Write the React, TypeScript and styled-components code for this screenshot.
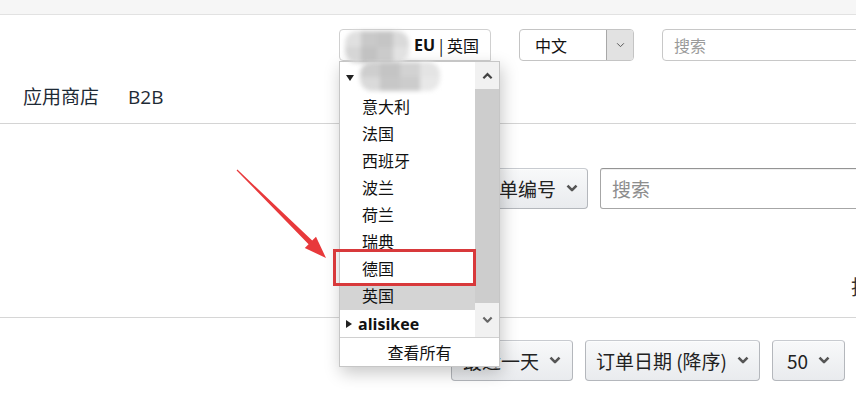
import React from 'react';
import styled, { createGlobalStyle } from 'styled-components';

const GlobalStyle = createGlobalStyle`
    body {
        margin: 0;
        overflow: hidden;
        background: #fff;
        font-family: "Noto Sans CJK SC", "Noto Sans", sans-serif;
        color: #111;
    }
`;

const Page = styled.div`
    position: relative;
    width: 880px;
    height: 399px;
`;

const TopStrip = styled.div`
    height: 14px;
    background: #f6f6f6;
    border-bottom: 1px solid #e2e2e2;
`;

const HeaderRow = styled.div`
    display: flex;
    align-items: center;
    padding: 14px 0 0 339px;
    height: 32px;
    gap: 28px;
`;

const AccountSwitcher = styled.div`
    position: relative;
    width: 152px;
    height: 32px;
    box-sizing: border-box;
    border: 1px solid #d0d0d0;
    border-radius: 4px 4px 0 4px;
    display: flex;
    align-items: center;
    justify-content: flex-end;
    padding-right: 11px;
    font-size: 16px;
    z-index: 2;
`;

const Bold = styled.b`
    font-family: "Open Sans", "Noto Sans CJK SC", sans-serif;
    font-weight: 700;
    margin-right: 4px;
`;

// mosaic blur that hides the account name; it straddles the button and the first list row
const Redaction = styled.div<{ $left: number; $top: number; $w: number; $h: number }>`
    position: absolute;
    left: ${p => p.$left}px;
    top: ${p => p.$top}px;
    width: ${p => p.$w}px;
    height: ${p => p.$h}px;
    display: grid;
    grid-template-columns: repeat(4, 1fr);
    grid-template-rows: repeat(2, 1fr);
    filter: blur(2px);
    border-radius: 12px;
    overflow: hidden;
    z-index: 5;
`;

const Cell = styled.div<{ $shade: string }>`
    background: ${p => p.$shade};
`;

const LangSelect = styled.div`
    width: 115px;
    height: 32px;
    box-sizing: border-box;
    border: 1px solid #c4c4c4;
    border-radius: 4px;
    display: flex;
    overflow: hidden;
    font-size: 16px;
`;

const LangText = styled.div`
    flex: 1;
    display: flex;
    align-items: center;
    padding-left: 15px;
`;

const LangArrow = styled.div`
    width: 26px;
    background: #e2e2e2;
    border-left: 1px solid #a8a8a8;
    display: flex;
    align-items: center;
    justify-content: center;
`;

const HeaderSearch = styled.div`
    flex: 1;
    height: 32px;
    box-sizing: border-box;
    border: 1px solid #c8c8c8;
    border-radius: 4px 0 0 4px;
    display: flex;
    align-items: center;
    padding-left: 11px;
    color: #9a9a9a;
    font-size: 16px;
`;

const NavRow = styled.div`
    display: flex;
    align-items: flex-end;
    gap: 29px;
    height: 63px;
    box-sizing: border-box;
    padding: 0 0 13px 23px;
    border-bottom: 1px solid #d4d4d4;
`;

const NavItem = styled.div`
    font-size: 19px;
    line-height: 26px;
    color: #1e2a35;
    font-family: "Open Sans", "Noto Sans CJK SC", sans-serif;
`;

const FilterRow = styled.div`
    display: flex;
    gap: 12px;
    padding: 44px 0 0 470px;
    height: 41px;
`;

const SelectBox = styled.div<{ $w: number }>`
    width: ${p => p.$w}px;
    height: 41px;
    box-sizing: border-box;
    border: 1px solid #b4b7bc;
    border-top-color: #c8cbd0;
    border-radius: 4px;
    background: linear-gradient(#f8f9fa, #e9ebee);
    display: flex;
    align-items: center;
    justify-content: center;
    gap: 10px;
    font-size: 19px;
    color: #222;
    box-shadow: 0 1px 0 rgba(255, 255, 255, 0.6) inset;
`;

const SearchInput = styled.div`
    flex: 1;
    height: 41px;
    box-sizing: border-box;
    border: 1px solid #a6a6a6;
    border-top-color: #949494;
    border-radius: 3px 0 0 3px;
    box-shadow: 0 1px 0 rgba(0, 0, 0, 0.06) inset;
    display: flex;
    align-items: center;
    padding-left: 11px;
    font-size: 19px;
    color: #8d8d8d;
`;

const MiddleSpace = styled.div`
    height: 108px;
    display: flex;
    justify-content: flex-end;
    align-items: flex-end;
    border-bottom: 1px solid #d6d6d6;
`;

const CutText = styled.div`
    font-size: 20px;
    color: #333;
    padding: 0 5px 16px 0;
    width: 24px;
`;

const BottomRow = styled.div`
    display: flex;
    gap: 12px;
    padding: 22px 0 0 451px;
`;

const Dropdown = styled.div`
    position: absolute;
    left: -1px;
    top: 31px;
    width: 161px;
    height: 306px;
    box-sizing: border-box;
    background: #fff;
    border: 1px solid #c6c6c6;
    box-shadow: 2px 6px 16px rgba(0, 0, 0, 0.22);
    display: flex;
    flex-direction: column;
    font-size: 16px;
    color: #111;
`;

const ListArea = styled.div`
    display: flex;
    height: 275px;
    border-bottom: 1px solid #d0d0d0;
`;

const List = styled.div`
    flex: 1;
    display: flex;
    flex-direction: column;
`;

const GroupHeader = styled.div<{ $h: number; $bold?: boolean }>`
    height: ${p => p.$h}px;
    display: flex;
    align-items: center;
    padding-left: 6px;
    gap: 6px;
    font-family: "Open Sans", "Noto Sans CJK SC", sans-serif;
    font-weight: ${p => (p.$bold ? 700 : 400)};
    font-size: 16px;
    color: #111;
`;

const Triangle = styled.span<{ $down?: boolean }>`
    width: 0;
    height: 0;
    ${p =>
        p.$down
            ? 'border-left: 4px solid transparent; border-right: 4px solid transparent; border-top: 6px solid #222;'
            : 'border-top: 4.5px solid transparent; border-bottom: 4.5px solid transparent; border-left: 6px solid #222;'}
`;

const Item = styled.div<{ $active?: boolean }>`
    height: 27px;
    box-sizing: border-box;
    padding: 0 0 3px 22px;
    display: flex;
    align-items: center;
    background: ${p => (p.$active ? '#d4d4d4' : 'transparent')};
`;

const Scrollbar = styled.div`
    width: 24px;
    display: flex;
    flex-direction: column;
`;

const ScrollButton = styled.div<{ $h: number }>`
    height: ${p => p.$h}px;
    display: flex;
    align-items: center;
    justify-content: center;
    background: #f1f1f1;
`;

const ScrollThumb = styled.div`
    flex: 1;
    background: #cdcdcd;
`;

const ViewAll = styled.div`
    flex: 1;
    display: flex;
    align-items: center;
    justify-content: center;
    font-size: 16px;
`;

const RedBox = styled.div`
    position: absolute;
    left: -7px;
    top: 187px;
    width: 143px;
    height: 37px;
    box-sizing: border-box;
    border: 3px solid #d8393b;
`;

const ArrowLayer = styled.svg`
    position: absolute;
    left: 220px;
    top: 160px;
    pointer-events: none;
`;

const Chevron = ({ size = 12, stroke = '#555', width = 2.6 }: { size?: number; stroke?: string; width?: number }) => (
    <svg width={size} height={size * 0.7} viewBox="0 0 12 8">
        <polyline points="1.5,1.5 6,6 10.5,1.5" fill="none" stroke={stroke} strokeWidth={width} strokeLinejoin="round" />
    </svg>
);

const ChevronUp = ({ stroke = '#444' }: { stroke?: string }) => (
    <svg width={11} height={8} viewBox="0 0 12 8">
        <polyline points="1.5,6.5 6,2 10.5,6.5" fill="none" stroke={stroke} strokeWidth={2.4} />
    </svg>
);

const topShades = ['#e0e0e0', '#c9c9c9', '#c5c5c5', '#dadada', '#d6d6d6', '#c2c2c2', '#cbcbcb', '#e2e2e2'];
const lowShades = ['#cecece', '#c4c4c4', '#d2d2d2', '#e4e4e4', '#dadada', '#c7c7c7', '#cccccc', '#e8e8e8'];

const countries = ['意大利', '法国', '西班牙', '波兰', '荷兰', '瑞典', '德国', '英国'];

const App = () => {
    return (
        <Page>
            <GlobalStyle />
            <TopStrip />
            <HeaderRow>
                <AccountSwitcher>
                    <Redaction $left={5} $top={1} $w={64} $h={32}>
                        {topShades.map((s, i) => (
                            <Cell key={i} $shade={s} />
                        ))}
                    </Redaction>
                    <Redaction $left={20} $top={32} $w={80} $h={29}>
                        {lowShades.map((s, i) => (
                            <Cell key={i} $shade={s} />
                        ))}
                    </Redaction>
                    <Bold>EU</Bold>| 英国
                    <Dropdown>
                        <ListArea>
                            <List>
                                <GroupHeader $h={32}>
                                    <Triangle $down />
                                </GroupHeader>
                                {countries.map(c => (
                                    <Item key={c} $active={c === '英国'}>{c}</Item>
                                ))}
                                <GroupHeader $h={27} $bold>
                                    <Triangle />
                                    alisikee
                                </GroupHeader>
                            </List>
                            <Scrollbar>
                                <ScrollButton $h={27}>
                                    <ChevronUp />
                                </ScrollButton>
                                <ScrollThumb />
                                <ScrollButton $h={34}>
                                    <Chevron size={11} stroke="#666" width={2.4} />
                                </ScrollButton>
                            </Scrollbar>
                        </ListArea>
                        <ViewAll>查看所有</ViewAll>
                        <RedBox />
                    </Dropdown>
                </AccountSwitcher>
                <LangSelect>
                    <LangText>中文</LangText>
                    <LangArrow>
                        <Chevron size={9} stroke="#555" width={1.3} />
                    </LangArrow>
                </LangSelect>
                <HeaderSearch>搜索</HeaderSearch>
            </HeaderRow>
            <NavRow>
                <NavItem>应用商店</NavItem>
                <NavItem>B2B</NavItem>
            </NavRow>
            <FilterRow>
                <SelectBox $w={118}>
                    订单编号
                    <Chevron />
                </SelectBox>
                <SearchInput>搜索</SearchInput>
            </FilterRow>
            <MiddleSpace>
                <CutText>批</CutText>
            </MiddleSpace>
            <BottomRow>
                <SelectBox $w={122}>
                    最近一天
                    <Chevron />
                </SelectBox>
                <SelectBox $w={175}>
                    订单日期 (降序)
                    <Chevron />
                </SelectBox>
                <SelectBox $w={73}>
                    50
                    <Chevron />
                </SelectBox>
            </BottomRow>
            <ArrowLayer width={120} height={110} viewBox="0 0 120 110">
                <polygon
                    points="17.4,9.6 92.2,80.6 96,76.8 106,98 84.8,88 88.6,84.2 16.6,10.4"
                    fill="#e8393b"
                />
            </ArrowLayer>
        </Page>
    );
};

export default App;
